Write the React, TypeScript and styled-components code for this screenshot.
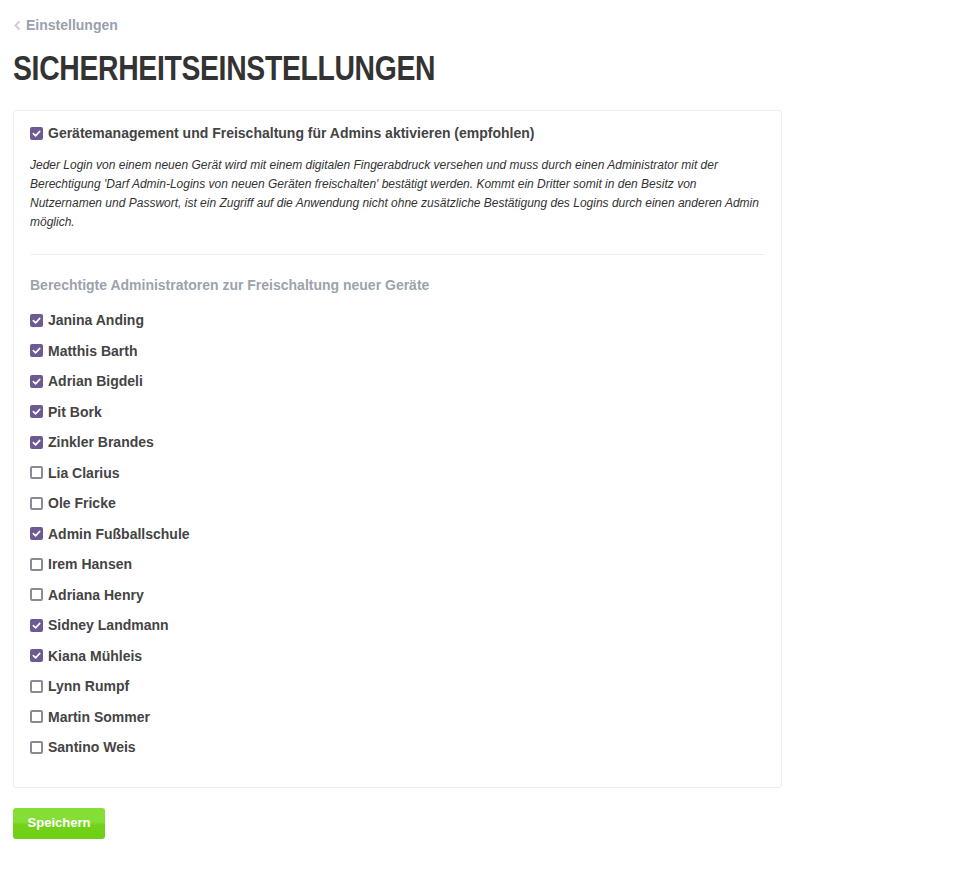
import React, { useState } from "react";
import styled, { createGlobalStyle } from "styled-components";

const GlobalStyle = createGlobalStyle`
  body {
    margin: 0;
    background: #fff;
    font-family: "Liberation Sans", Arial, sans-serif;
    color: #444;
  }
`;

const Page = styled.div`
  padding: 15px 13px 30px;
  width: 769px;
`;

const BackLink = styled.a`
  display: flex;
  align-items: center;
  gap: 4px;
  font-size: 14px;
  font-weight: bold;
  color: #98a1ac;
  text-decoration: none;
  height: 20px;
`;

const Title = styled.h1`
  margin: 13px 0 22px;
  font-family: "Liberation Sans", Arial, sans-serif;
  font-size: 35px;
  line-height: 40px;
  font-weight: bold;
  color: #333;
  letter-spacing: -0.4px;
  white-space: nowrap;
`;

/* condensed display face isn't installed, so squeeze the sans */
const TitleText = styled.span`
  display: inline-block;
  transform: scaleX(0.81);
  transform-origin: left center;
`;

const Panel = styled.div`
  border: 1px solid #eee;
  border-radius: 3px;
  padding: 13px 16px 24px;
`;

const Row = styled.label<{ $big?: boolean }>`
  display: flex;
  align-items: center;
  gap: 5px;
  height: ${(p) => (p.$big ? "18px" : "30.5px")};
  font-size: 14px;
  font-weight: bold;
  color: #444;
  cursor: pointer;
`;

const Box = styled.span<{ $checked: boolean }>`
  box-sizing: border-box;
  width: 13px;
  height: 13px;
  border-radius: 2px;
  flex-shrink: 0;
  display: flex;
  align-items: center;
  justify-content: center;
  background: ${(p) => (p.$checked ? "#6e5a92" : "#fff")};
  border: ${(p) => (p.$checked ? "none" : "2px solid #8c8a99")};
`;

const Description = styled.p`
  margin: 14px 0 22px;
  font-size: 12px;
  line-height: 19px;
  font-style: italic;
  color: #333;
`;

const Divider = styled.hr`
  border: none;
  border-top: 1px solid #f0f0f0;
  margin: 0 0 20px;
`;

const SubHeading = styled.h3`
  margin: 0 0 10px;
  font-size: 14px;
  font-weight: bold;
  color: #9ba3ad;
  line-height: 20px;
`;

const SaveButton = styled.button`
  margin-top: 20px;
  width: 92px;
  height: 31px;
  border: none;
  border-radius: 3px;
  background: linear-gradient(#85de35 0, #85de35 45%, #72d11a 55%, #6fcf16 100%);
  color: #fff;
  font-family: "Liberation Sans", Arial, sans-serif;
  font-size: 13px;
  font-weight: bold;
  padding: 0 0 2px;
  cursor: pointer;
`;

const admins: [string, boolean][] = [
  ["Janina Anding", true],
  ["Matthis Barth", true],
  ["Adrian Bigdeli", true],
  ["Pit Bork", true],
  ["Zinkler Brandes", true],
  ["Lia Clarius", false],
  ["Ole Fricke", false],
  ["Admin Fußballschule", true],
  ["Irem Hansen", false],
  ["Adriana Henry", false],
  ["Sidney Landmann", true],
  ["Kiana Mühleis", true],
  ["Lynn Rumpf", false],
  ["Martin Sommer", false],
  ["Santino Weis", false],
];

function Check({ checked }: { checked: boolean }) {
  return (
    <Box $checked={checked}>
      {checked && (
        <svg width="9" height="9" viewBox="0 0 10 10">
          <path d="M1.5 5.2 L4 7.6 L8.6 2.6" fill="none" stroke="#fff" strokeWidth="1.8" strokeLinecap="round" strokeLinejoin="round" />
        </svg>
      )}
    </Box>
  );
}

export default function App() {
  const [enabled, setEnabled] = useState(true);
  const [selected, setSelected] = useState(admins.map((a) => a[1]));

  const toggle = (i: number) =>
    setSelected((s) => s.map((v, j) => (j === i ? !v : v)));

  return (
    <>
      <GlobalStyle />
      <Page>
        <BackLink href="#">
          <svg width="9" height="11" viewBox="0 0 9 11">
            <path d="M6.5 1.5 L2.5 5.5 L6.5 9.5" fill="none" stroke="#cfcfcf" strokeWidth="2" />
          </svg>
          Einstellungen
        </BackLink>
        <Title>
          <TitleText>SICHERHEITSEINSTELLUNGEN</TitleText>
        </Title>
        <Panel>
          <Row $big onClick={() => setEnabled(!enabled)}>
            <Check checked={enabled} />
            Gerätemanagement und Freischaltung für Admins aktivieren (empfohlen)
          </Row>
          <Description>
            Jeder Login von einem neuen Gerät wird mit einem digitalen Fingerabdruck versehen und muss durch einen Administrator mit der
            <br />
            Berechtigung 'Darf Admin-Logins von neuen Geräten freischalten' bestätigt werden. Kommt ein Dritter somit in den Besitz von
            <br />
            Nutzernamen und Passwort, ist ein Zugriff auf die Anwendung nicht ohne zusätzliche Bestätigung des Logins durch einen anderen Admin
            <br />
            möglich.
          </Description>
          <Divider />
          <SubHeading>Berechtigte Administratoren zur Freischaltung neuer Geräte</SubHeading>
          {admins.map(([name], i) => (
            <Row key={name} onClick={() => toggle(i)}>
              <Check checked={selected[i]} />
              {name}
            </Row>
          ))}
        </Panel>
        <SaveButton>Speichern</SaveButton>
      </Page>
    </>
  );
}
